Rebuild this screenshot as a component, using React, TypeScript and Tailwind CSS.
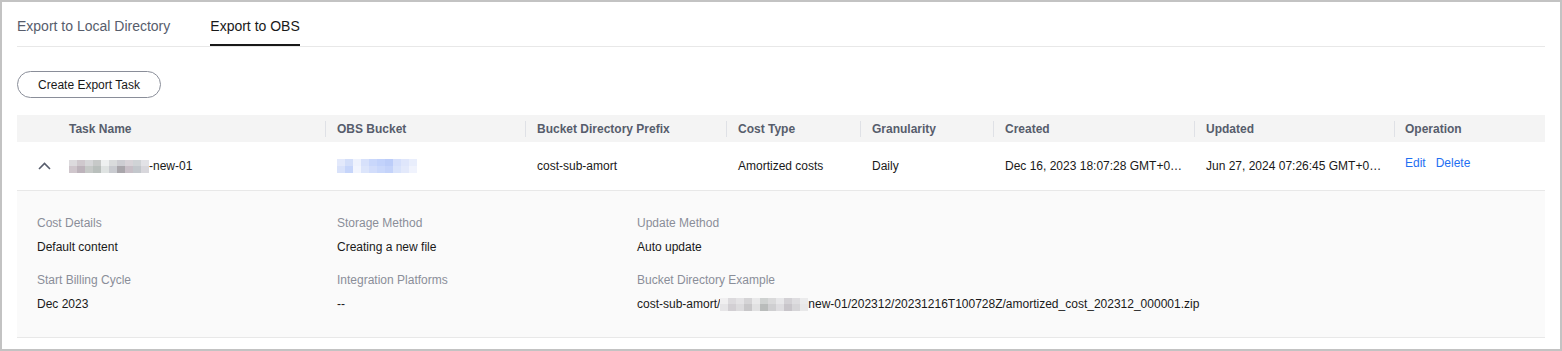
import React from "react";

const FONT = { fontFamily: '"Liberation Sans", Arial, sans-serif' };

function Mosaic({ rows, w, h }: { rows: string[][]; w: number; h: number }) {
  return (
    <span className="inline-flex flex-col align-middle">
      {rows.map((r, i) => (
        <span key={i} className="flex">
          {r.map((c, j) => (
            <span key={j} style={{ width: w, height: h, background: c }} />
          ))}
        </span>
      ))}
    </span>
  );
}

const nameMosaic = [
  ["#dcdadd", "#cfc8cd", "#d6d6d8", "#c7c9c8", "#eef0f0", "#d9dbdc", "#cdcdd2", "#d8d3d8", "#d0d3d6", "#e2e2e6"],
  ["#cfc6cc", "#bdb3bb", "#c6c9c7", "#b9bfbc", "#dfe3e2", "#c9cbd0", "#a9a6ab", "#c8bfc7", "#c3c7cc", "#d8d7dc"],
];
const bucketMosaic = [
  ["#e3e9fb", "#d3def9", "#eef2fd", "#d7e1fb", "#c9d7fb", "#c2d2fb", "#bccdf9", "#d5dffb", "#dfe6fb", "#e9eefc"],
  ["#d9e2fa", "#c6d5fa", "#f2f5fe", "#dce5fb", "#d2ddfb", "#cad8fb", "#c4d3fa", "#d9e3fb", "#e3e9fb", "#f0f3fd"],
];
const exampleMosaic = [
  ["#f0eff0", "#dcdadd", "#e4e3e5", "#d5d4d6", "#e9e9ea", "#cfd2d1", "#dadadb", "#e7e7e9", "#d3d1d5", "#dedde0", "#ebebec"],
  ["#e6e5e7", "#d2cfd3", "#dcdbdd", "#c8c7c9", "#e1e1e2", "#b9bcbb", "#cfcfd1", "#dedde0", "#c8c5ca", "#d6d5d8", "#e8e8e9"],
];

const cols = [
  { label: "OBS Bucket", w: "w-[200px]" },
  { label: "Bucket Directory Prefix", w: "w-[201px]" },
  { label: "Cost Type", w: "w-[134px]" },
  { label: "Granularity", w: "w-[133px]" },
  { label: "Created", w: "w-[201px]" },
  { label: "Updated", w: "w-[200px]" },
];

function Detail({ label, children }: { label: string; children: React.ReactNode }) {
  return (
    <div className="flex flex-col">
      <div className="leading-[18px] text-[#8a8e99]">{label}</div>
      <div className="mt-[6px] leading-[18px] text-[#191919] whitespace-nowrap flex items-center">{children}</div>
    </div>
  );
}

export default function App() {
  return (
    <div
      style={FONT}
      className="w-[1562px] h-[351px] border-2 border-[#c3c3c3] bg-white px-[15px] overflow-hidden"
    >
      {/* Tabs */}
      <div className="flex gap-[40px] border-b border-[#e8e8e8] text-[14px]">
        <div className="pt-[14px] pb-[8px] leading-[20px] border-b-2 border-transparent text-[#575d6c]">
          Export to Local Directory
        </div>
        <div className="pt-[14px] pb-[8px] leading-[20px] border-b-2 border-[#191919] text-[#191919]">
          Export to OBS
        </div>
      </div>

      {/* Button */}
      <div className="mt-[24px] flex">
        <button className="h-[27px] w-[144px] rounded-full border border-[#8a8e99] text-[12px] text-[#191919] flex items-center justify-center">
          Create Export Task
        </button>
      </div>

      {/* Table */}
      <div className="mt-[17px] text-[12px]">
        {/* header */}
        <div className="flex h-[27px] bg-[#f4f4f4] items-center font-bold text-[#575d6c]">
          <div className="w-[308px] pl-[52px]">Task Name</div>
          {cols.map((c) => (
            <div key={c.label} className={`${c.w} flex items-center`}>
              <span className="w-px h-[16px] bg-[#dfe1e6]" />
              <span className="pl-[11px]">{c.label}</span>
            </div>
          ))}
          <div className="flex-1 flex items-center">
            <span className="w-px h-[16px] bg-[#dfe1e6]" />
            <span className="pl-[10px]">Operation</span>
          </div>
        </div>

        {/* row */}
        <div className="flex h-[49px] items-center border-b border-[#e8e8e8] text-[#191919]">
          <div className="w-[308px] flex items-center">
            <span className="pl-[21px] flex items-center">
              <svg width="13" height="8" viewBox="0 0 13 8" fill="none">
                <path d="M1 7L6.5 1.5L12 7" stroke="#575d6c" strokeWidth="1.6" />
              </svg>
            </span>
            <span className="ml-[18px] flex items-center">
              <Mosaic rows={nameMosaic} w={8} h={6.5} />
              <span>-new-01</span>
            </span>
          </div>
          <div className="w-[200px] pl-[12px] flex items-center">
            <Mosaic rows={bucketMosaic} w={8} h={7} />
          </div>
          <div className="w-[201px] px-3">cost-sub-amort</div>
          <div className="w-[134px] px-3">Amortized costs</div>
          <div className="w-[133px] px-3">Daily</div>
          <div className="w-[201px] pl-3 pr-[8px] truncate">Dec 16, 2023 18:07:28 GMT+08:00</div>
          <div className="w-[200px] px-3 truncate">Jun 27, 2024 07:26:45 GMT+08:00</div>
          <div className="flex-1 pl-[11px] flex gap-[10px] mb-[6px] text-[#1f6ff2]">
            <span>Edit</span>
            <span>Delete</span>
          </div>
        </div>

        {/* expanded */}
        <div className="bg-[#fafafa] border-b border-[#e8e8e8] pl-[20px] pt-[23px] pb-[24px]">
          <div className="grid grid-cols-[300px_300px_1fr] gap-y-[15px]">
            <Detail label="Cost Details">Default content</Detail>
            <Detail label="Storage Method">Creating a new file</Detail>
            <Detail label="Update Method">Auto update</Detail>
            <Detail label="Start Billing Cycle">Dec 2023</Detail>
            <Detail label="Integration Platforms">--</Detail>
            <Detail label="Bucket Directory Example">
              <span>cost-sub-amort/</span>
              <Mosaic rows={exampleMosaic} w={8} h={6.5} />
              <span>new-01/202312/20231216T100728Z/amortized_cost_202312_000001.zip</span>
            </Detail>
          </div>
        </div>
      </div>
    </div>
  );
}
